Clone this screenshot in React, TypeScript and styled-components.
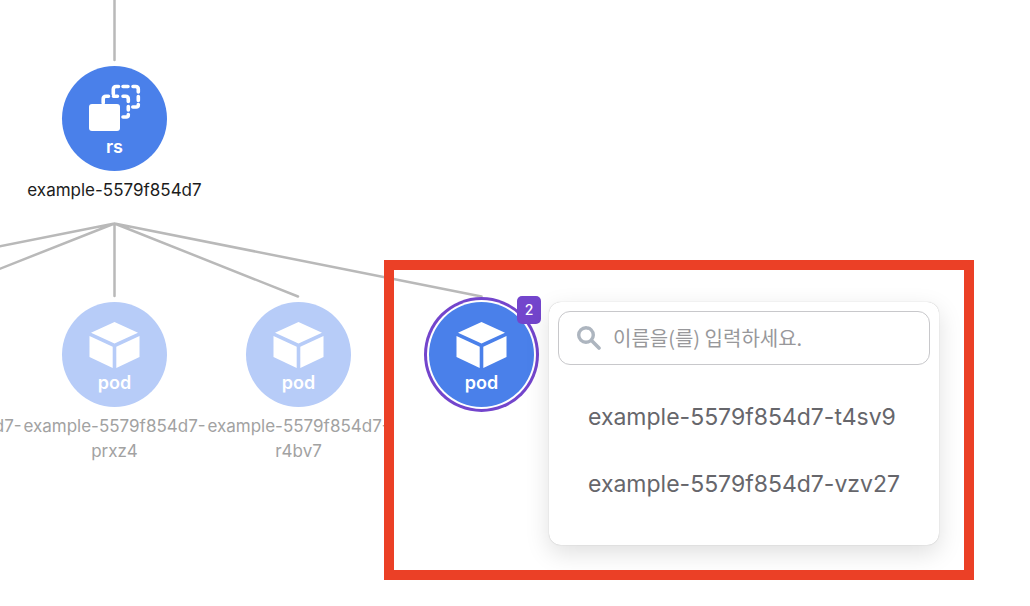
import React from 'react';
import styled, { createGlobalStyle, css } from 'styled-components';

const GlobalStyle = createGlobalStyle`
  *, *::before, *::after { box-sizing: border-box; }
  body {
    margin: 0;
    background: #fff;
    font-family: Inter, "Noto Sans CJK KR", sans-serif;
  }
`;

const Canvas = styled.main`
  position: relative;
  min-height: 100vh;
  overflow: hidden;
  background: #fff;
`;

const Edges = styled.svg`
  position: absolute;
  inset: 0;
  width: 100%;
  height: 100%;
  fill: none;
  stroke: #b9b9b9;
  stroke-linecap: round;
`;

const NodeBox = styled.div<{ $x: number; $y: number }>`
  position: absolute;
  left: ${({ $x }) => $x}px;
  top: ${({ $y }) => $y}px;
  width: 183px;
  display: flex;
  flex-direction: column;
  align-items: center;
  gap: 7px;
`;

const NodeCircle = styled.button<{ $faded?: boolean; $selected?: boolean }>`
  position: relative;
  display: flex;
  flex-direction: column;
  align-items: center;
  width: 105px;
  height: 105px;
  padding: 16px 0 0;
  border: 0;
  border-radius: 50%;
  background: ${({ $faded }) => ($faded ? '#b7ccf8' : '#4a80ea')};
  color: #fff;
  font: 600 18px/24px Inter, sans-serif;
  cursor: pointer;
  ${({ $selected }) =>
    $selected &&
    css`
      box-shadow: 0 0 0 2px #fff, 0 0 0 5px #7345cc;
    `}
`;

const NodeIcon = styled.svg`
  width: 55px;
  height: 53px;
  fill: currentColor;
`;

const CountBadge = styled.span`
  position: absolute;
  top: -6px;
  right: -7px;
  width: 24px;
  height: 28px;
  border-radius: 5px;
  background: #7345cc;
  font-size: 14px;
  font-weight: 500;
  line-height: 28px;
  text-align: center;
`;

const NodeLabel = styled.span<{ $faded?: boolean }>`
  color: ${({ $faded }) => ($faded ? '#a2a2a2' : '#1c1c1c')};
  font-size: 17px;
  line-height: 25px;
  text-align: center;
  white-space: pre;
`;

const Highlight = styled.div`
  position: absolute;
  left: 384px;
  top: 260px;
  width: 590px;
  height: 320px;
  border: 10px solid #eb4026;
  pointer-events: none;
`;

const Popup = styled.section`
  position: absolute;
  left: 549px;
  top: 302px;
  width: 390px;
  padding: 9px 9px 28px;
  border-radius: 12px;
  background: #fff;
  box-shadow: 0 0 1px rgba(0, 0, 0, 0.3), 0 8px 24px rgba(0, 0, 0, 0.13);
`;

const SearchField = styled.label`
  display: flex;
  align-items: center;
  gap: 12px;
  height: 54px;
  padding: 0 18px;
  border: 1px solid #c8c8cb;
  border-radius: 12px;
`;

const SearchIcon = styled.svg`
  flex: none;
  width: 24px;
  height: 24px;
  fill: none;
  stroke: #adb5bf;
`;

const SearchInput = styled.input`
  flex: 1;
  min-width: 0;
  padding: 0;
  border: 0;
  outline: 0;
  background: none;
  color: #66666b;
  font: 400 20px/28px "Noto Sans CJK KR", Inter, sans-serif;
  &::placeholder { color: #98989b; opacity: 1; }
`;

const PodList = styled.ul`
  margin: 18px 0 0;
  padding: 0;
  list-style: none;
`;

const PodItem = styled.button`
  display: block;
  width: 100%;
  height: 67px;
  padding: 0 30px;
  border: 0;
  background: none;
  color: #66666b;
  font: 400 23px/32px Inter, sans-serif;
  text-align: left;
  white-space: nowrap;
  cursor: pointer;
`;

const ReplicaSetIcon = () => (
  <NodeIcon viewBox="1 0 55 53" aria-hidden="true">
    <rect x="3" y="22" width="31" height="27" rx="3" />
    <g fill="none" stroke="currentColor" strokeWidth="3.600" strokeLinecap="round" strokeLinejoin="round">
      <path d="M17.200 21v-4q0-2.800 2.800-2.800h2.500M27.500 14.200h4M37 14.200h2.500q2.800 0 2.800 2.800v2.500M42.300 24.500v3.500M42.300 32.500v.500q0 2-2 2h-3.300" />
      <path d="M27.300 12v-4.700q0-2.800 2.800-2.800h2.400M37 4.500h5M47 4.500h2.500q2.800 0 2.800 2.800v2.700M52.300 14.500v4M52.300 22.500v.500q0 2-2 2h-3.500" />
    </g>
  </NodeIcon>
);

const PodIcon = () => (
  <NodeIcon viewBox="1 0 55 53" aria-hidden="true">
    <path d="M28.500 4 52 14.700 28.500 25.600 5 14.700Z" />
    <path d="M3.500 18 26.700 28.800V50L3.500 39Z" />
    <path d="M53.500 18 30.300 28.800V50L53.500 39Z" />
  </NodeIcon>
);

interface NodeData {
  kind: 'rs' | 'pod';
  x: number;
  y: number;
  label?: string;
  faded?: boolean;
  count?: number;
}

const nodes: NodeData[] = [
  { kind: 'rs', x: 23, y: 66, label: 'example-5579f854d7' },
  { kind: 'pod', x: -161, y: 302, label: 'example-5579f854d7-', faded: true },
  { kind: 'pod', x: 23, y: 302, label: 'example-5579f854d7-\nprxz4', faded: true },
  { kind: 'pod', x: 207, y: 302, label: 'example-5579f854d7-\nr4bv7', faded: true },
  { kind: 'pod', x: 390, y: 302, count: 2 },
];

const pods = ['example-5579f854d7-t4sv9', 'example-5579f854d7-vzv27'];

export default function App() {
  return (
    <>
      <GlobalStyle />
      <Canvas>
        <Edges aria-hidden="true">
          <path
            d="M114.500 -5V60M114.500 223.500V296M114.500 223.500-69 296M114.500 223.500-252 296M114.500 223.500 298 296.500M114.500 223.500 481.500 296.500"
            strokeWidth="2.500"
          />
        </Edges>
        {nodes.map((node) => (
          <NodeBox key={node.x + node.kind} $x={node.x} $y={node.y}>
            <NodeCircle type="button" $faded={node.faded} $selected={!!node.count}>
              {node.kind === 'rs' ? <ReplicaSetIcon /> : <PodIcon />}
              {node.kind}
              {node.count && <CountBadge>{node.count}</CountBadge>}
            </NodeCircle>
            {node.label && <NodeLabel $faded={node.faded}>{node.label}</NodeLabel>}
          </NodeBox>
        ))}
        <Popup aria-label="pod">
          <SearchField>
            <SearchIcon viewBox="0 0 24 24" aria-hidden="true">
              <circle cx="9" cy="9" r="7.300" strokeWidth="3.400" />
              <path d="m14.500 14.500 7.500 7.500" strokeWidth="3.600" strokeLinecap="round" />
            </SearchIcon>
            <SearchInput type="text" placeholder="이름을(를) 입력하세요." />
          </SearchField>
          <PodList>
            {pods.map((pod) => (
              <li key={pod}>
                <PodItem type="button">{pod}</PodItem>
              </li>
            ))}
          </PodList>
        </Popup>
        <Highlight />
      </Canvas>
    </>
  );
}
